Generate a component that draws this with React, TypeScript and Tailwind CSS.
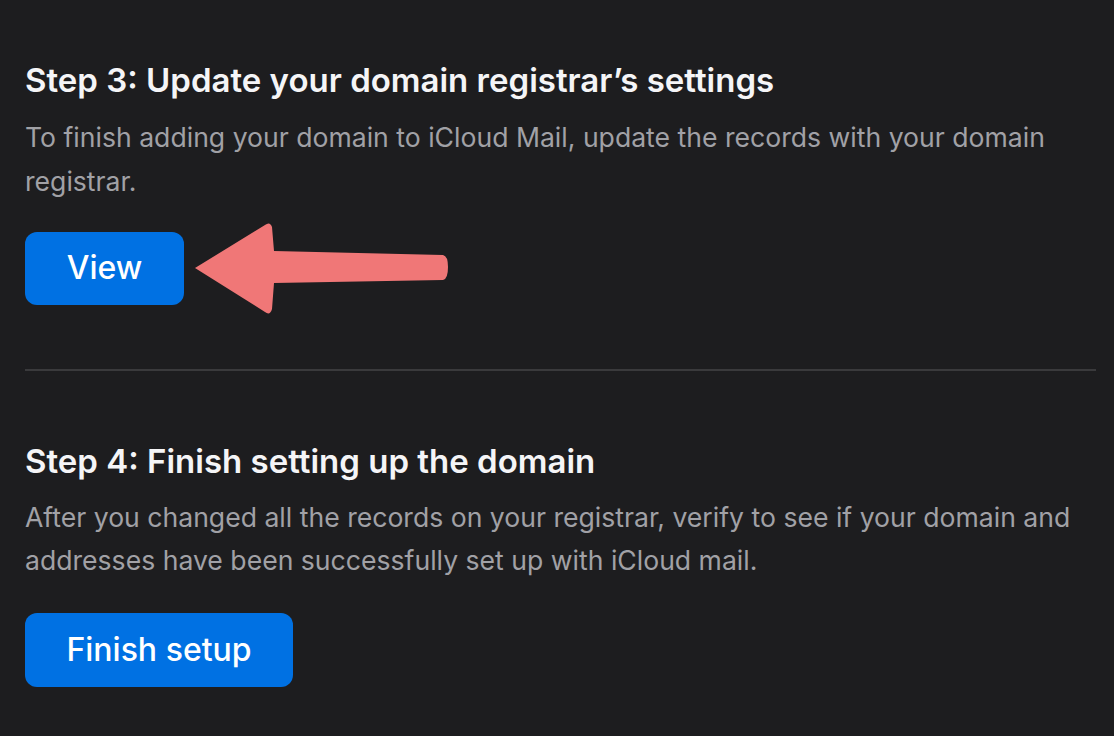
export default function App() {
    return (
        <div className="min-h-screen bg-[#1d1d1f] pl-[25px] pr-[18px] pt-[60px] pb-10 font-['Inter',sans-serif]">

            {/* Step 3 */}
            <section>
                <h2 className="text-[33px] leading-[40px] font-semibold text-[#f5f5f7]">
                    Step 3: Update your domain registrar’s settings
                </h2>
                <p className="mt-[15px] text-[26.6px] leading-[44px] text-[#a1a1a6]">
                    To finish adding your domain to iCloud Mail, update the records with your domain registrar.
                </p>
                <div className="mt-[17px] flex items-center gap-[10px]">
                    <button className="w-[159px] h-[73px] rounded-[12px] bg-[#0071e3] text-white text-[32px] font-medium">
                        View
                    </button>
                    <svg width="256" height="96" viewBox="0 0 256 96">
                        <path
                            d="M1 48 L71 5 Q76 1 78 7 L80 31 L249 35 Q254 36 254 47 Q254 59 249 60 L80 63 L78 89 Q76 96 71 92 Z"
                            fill="#f07777"
                        />
                    </svg>
                </div>
            </section>

            <hr className="mt-[53px] border-0 h-[2px] bg-[#3a3a3c]" />

            {/* Step 4 */}
            <section className="mt-[70px]">
                <h2 className="text-[33px] leading-[40px] font-semibold text-[#f5f5f7]">
                    Step 4: Finish setting up the domain
                </h2>
                <p className="mt-[15px] text-[26.6px] leading-[43px] text-[#a1a1a6]">
                    After you changed all the records on your registrar, verify to see if your domain and addresses have been successfully set up with iCloud mail.
                </p>
                <button className="mt-[31px] w-[268px] h-[74px] rounded-[12px] bg-[#0071e3] text-white text-[32px] font-medium">
                    Finish setup
                </button>
            </section>
        </div>
    )
}
